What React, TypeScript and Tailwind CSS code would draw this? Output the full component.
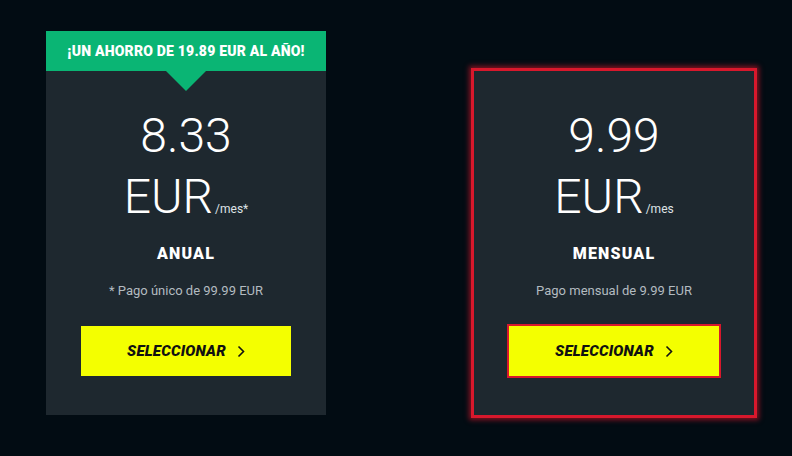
import React from "react";

function Chevron() {
  return (
    <svg width="8" height="13" viewBox="0 0 8 13" fill="none" className="ml-[11px]">
      <path d="M1.5 1.5 L6.5 6.5 L1.5 11.5" stroke="#111" strokeWidth="1.6" />
    </svg>
  );
}

function Card({
  price,
  per,
  title,
  note,
  selected,
}: {
  price: string;
  per: string;
  title: string;
  note: string;
  selected?: boolean;
}) {
  return (
    <div className="flex flex-col items-center pt-[41px] h-[344px]">
      <div className="text-white text-[48px] leading-[48px] font-light" style={{ fontFamily: "Roboto, sans-serif" }}>
        {price}
      </div>
      <div className="flex items-baseline mt-[13px] text-white" style={{ fontFamily: "Roboto, sans-serif" }}>
        <span className="text-[48px] leading-[48px] font-light">EUR</span>
        <span className="text-[12px] ml-[2px] text-[#dfe3e6]">{per}</span>
      </div>
      <div className="mt-[23px] text-white text-[16px] leading-[20px] font-black tracking-[1.2px]" style={{ fontFamily: "Roboto, sans-serif" }}>
        {title}
      </div>
      <div className="mt-[19px] text-[#b3bbc0] text-[13px] leading-[16px]" style={{ fontFamily: "Roboto, sans-serif" }}>
        {note}
      </div>
      <button
        className={
          "mt-[27px] w-[210px] h-[50px] bg-[#f4ff00] flex items-center justify-center " +
          (selected ? "ring-2 ring-[#d8182c]" : "")
        }
      >
        <span className="italic font-black text-[15px] text-[#111] tracking-[0.2px]" style={{ fontFamily: "Roboto, sans-serif" }}>
          SELECCIONAR
        </span>
        <Chevron />
      </button>
    </div>
  );
}

export default function App() {
  return (
    <div className="w-[792px] h-[456px] bg-[#020c13] flex items-end pl-[46px] pb-[41px] gap-[148px] overflow-hidden">
      <div className="w-[280px] bg-[#1e282f] flex flex-col">
        <div className="relative h-[40px] bg-[#0ab574] flex items-center justify-center">
          <span className="text-white font-black text-[14px] tracking-[0.2px]" style={{ fontFamily: "Roboto, sans-serif" }}>
            ¡UN AHORRO DE 19.89 EUR AL AÑO!
          </span>
          <div className="absolute left-1/2 -translate-x-1/2 top-[40px] w-0 h-0 border-l-[20px] border-r-[20px] border-t-[20px] border-l-transparent border-r-transparent border-t-[#0ab574]" />
        </div>
        <Card price="8.33" per="/mes*" title="ANUAL" note="* Pago único de 99.99 EUR" />
      </div>
      <div className="w-[280px] bg-[#1e282f] shadow-[0_0_0_3px_#d8182c,0_0_5px_5px_rgba(216,24,44,0.6)]">
        <Card price="9.99" per="/mes" title="MENSUAL" note="Pago mensual de 9.99 EUR" selected />
      </div>
    </div>
  );
}
